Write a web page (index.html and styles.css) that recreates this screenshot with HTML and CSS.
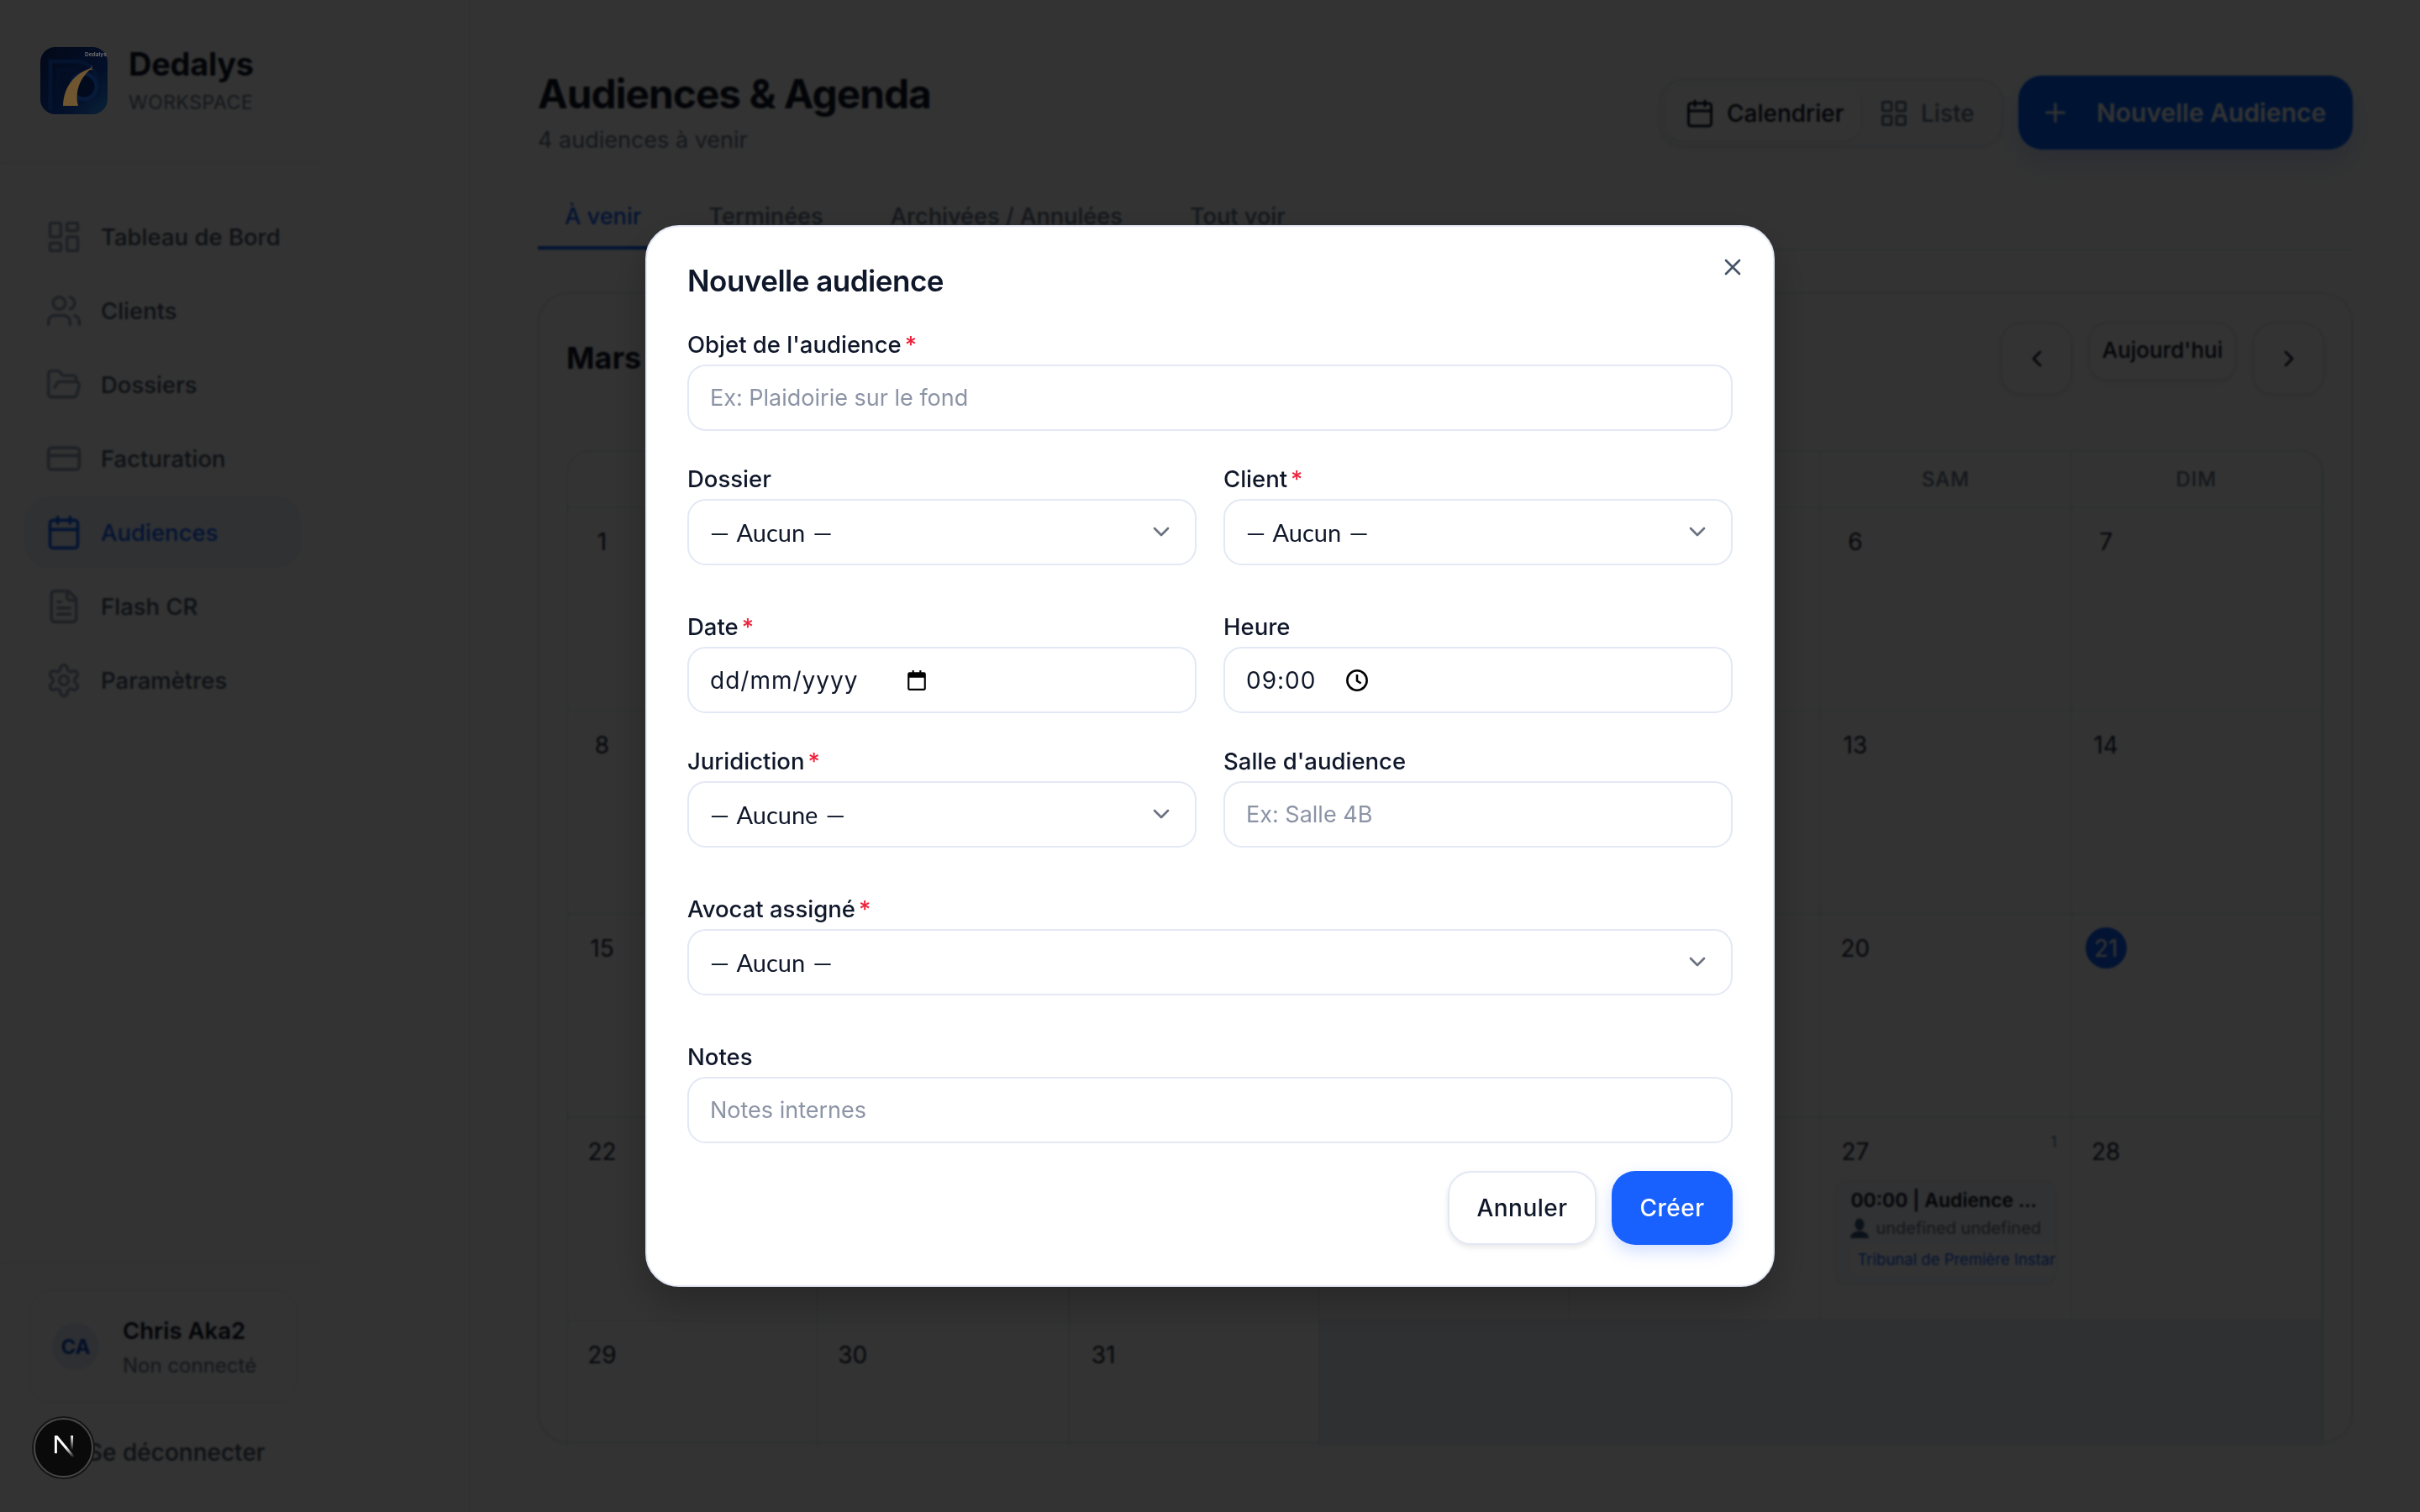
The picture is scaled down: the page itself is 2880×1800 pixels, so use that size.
FILE: index.html
```html
<!DOCTYPE html>
<html lang="fr">
<head>
  <meta charset="UTF-8">
  <title>Audiences &amp; Agenda</title>
  <link rel="stylesheet" href="styles.css">
</head>
<body>
  <div class="app">
    <aside class="sidebar">
      <div class="brand">
        <svg class="brand-logo" viewBox="0 0 80 80">
          <defs>
            <linearGradient id="logoBg" x1="0" y1="0" x2="1" y2="1">
              <stop offset="0" stop-color="#020817"/>
              <stop offset="0.65" stop-color="#03102a"/>
              <stop offset="1" stop-color="#0a2238"/>
            </linearGradient>
          </defs>
          <rect width="80" height="80" rx="18" fill="url(#logoBg)"/>
          <path d="M12 75V17h32a26 29 0 0 1 22 42" fill="none" stroke="#04132e" stroke-width="5"/>
          <path d="M21 75V27h22" fill="none" stroke="#030f26" stroke-width="4"/>
          <circle cx="52" cy="47" r="15" fill="#020a1e" stroke="#071a3a" stroke-width="5"/>
          <path d="M27 70C28 46 41 32 60 25l2-4-1 5 2 1-4 0C50 35 40 50 45 70z" fill="#6f5630"/>
          <text class="logo-word" x="53" y="11">Dedalys</text>
        </svg>
        <div>
          <div class="brand-name">Dedalys</div>
          <div class="brand-sub">WORKSPACE</div>
        </div>
      </div>

      <nav class="nav">
        <a class="nav-item">
          <svg class="icon" viewBox="0 0 24 24"><rect x="3" y="3" width="7" height="9" rx="1"/><rect x="14" y="3" width="7" height="5" rx="1"/><rect x="14" y="12" width="7" height="9" rx="1"/><rect x="3" y="16" width="7" height="5" rx="1"/></svg>
          Tableau de Bord
        </a>
        <a class="nav-item">
          <svg class="icon" viewBox="0 0 24 24"><path d="M16 21v-2a4 4 0 0 0-4-4H6a4 4 0 0 0-4 4v2"/><circle cx="9" cy="7" r="4"/><path d="M22 21v-2a4 4 0 0 0-3-3.87"/><path d="M16 3.13a4 4 0 0 1 0 7.75"/></svg>
          Clients
        </a>
        <a class="nav-item">
          <svg class="icon" viewBox="0 0 24 24"><path d="m6 14 1.5-2.9A2 2 0 0 1 9.24 10H20a2 2 0 0 1 1.94 2.5l-1.54 6a2 2 0 0 1-1.95 1.5H4a2 2 0 0 1-2-2V5a2 2 0 0 1 2-2h3.9a2 2 0 0 1 1.69.9l.81 1.2a2 2 0 0 0 1.67.9H18a2 2 0 0 1 2 2v2"/></svg>
          Dossiers
        </a>
        <a class="nav-item">
          <svg class="icon" viewBox="0 0 24 24"><rect x="2" y="5" width="20" height="14" rx="2"/><path d="M2 10h20"/></svg>
          Facturation
        </a>
        <a class="nav-item active">
          <svg class="icon" viewBox="0 0 24 24"><path d="M8 2v4"/><path d="M16 2v4"/><rect x="3" y="4" width="18" height="18" rx="2"/><path d="M3 10h18"/></svg>
          Audiences
        </a>
        <a class="nav-item">
          <svg class="icon" viewBox="0 0 24 24"><path d="M15 2H6a2 2 0 0 0-2 2v16a2 2 0 0 0 2 2h12a2 2 0 0 0 2-2V7Z"/><path d="M14 2v4a2 2 0 0 0 2 2h4"/><path d="M10 9H8"/><path d="M16 13H8"/><path d="M16 17H8"/></svg>
          Flash CR
        </a>
        <a class="nav-item">
          <svg class="icon" viewBox="0 0 24 24"><path d="M12.22 2h-.44a2 2 0 0 0-2 2v.18a2 2 0 0 1-1 1.73l-.43.25a2 2 0 0 1-2 0l-.15-.08a2 2 0 0 0-2.73.73l-.22.38a2 2 0 0 0 .73 2.73l.15.1a2 2 0 0 1 1 1.72v.51a2 2 0 0 1-1 1.74l-.15.09a2 2 0 0 0-.73 2.73l.22.38a2 2 0 0 0 2.73.73l.15-.08a2 2 0 0 1 2 0l.43.25a2 2 0 0 1 1 1.73V20a2 2 0 0 0 2 2h.44a2 2 0 0 0 2-2v-.18a2 2 0 0 1 1-1.73l.43-.25a2 2 0 0 1 2 0l.15.08a2 2 0 0 0 2.73-.73l.22-.39a2 2 0 0 0-.73-2.73l-.15-.08a2 2 0 0 1-1-1.74v-.5a2 2 0 0 1 1-1.74l.15-.09a2 2 0 0 0 .73-2.73l-.22-.38a2 2 0 0 0-2.73-.73l-.15.08a2 2 0 0 1-2 0l-.43-.25a2 2 0 0 1-1-1.73V4a2 2 0 0 0-2-2z"/><circle cx="12" cy="12" r="3"/></svg>
          Paramètres
        </a>
      </nav>

      <div class="side-foot">
        <div class="user-card">
          <div class="avatar">CA</div>
          <div>
            <div class="user-name">Chris Aka2</div>
            <div class="user-status">Non connecté</div>
          </div>
        </div>
        <div class="logout">Se déconnecter</div>
      </div>
    </aside>

    <main class="main">
      <header class="page-head">
        <div>
          <h1 class="page-title">Audiences &amp; Agenda</h1>
          <div class="page-sub">4 audiences à venir</div>
        </div>
        <div class="head-actions">
          <div class="view-toggle">
            <div class="view-btn on">
              <svg class="icon-sm" viewBox="0 0 24 24"><path d="M8 2v4"/><path d="M16 2v4"/><rect x="3" y="4" width="18" height="18" rx="2"/><path d="M3 10h18"/></svg>
              Calendrier
            </div>
            <div class="view-btn">
              <svg class="icon-sm" viewBox="0 0 24 24"><rect x="3" y="3" width="7" height="7" rx="1"/><rect x="14" y="3" width="7" height="7" rx="1"/><rect x="14" y="14" width="7" height="7" rx="1"/><rect x="3" y="14" width="7" height="7" rx="1"/></svg>
              Liste
            </div>
          </div>
          <div class="new-btn">
            <svg class="icon-sm" viewBox="0 0 24 24"><path d="M5 12h14"/><path d="M12 5v14"/></svg>
            Nouvelle Audience
          </div>
        </div>
      </header>

      <div class="tabs">
        <div class="tab on">À venir</div>
        <div class="tab">Terminées</div>
        <div class="tab">Archivées / Annulées</div>
        <div class="tab">Tout voir</div>
      </div>

      <section class="calendar">
        <div class="cal-head">
          <div class="cal-month">Mars 2026</div>
          <div class="cal-nav">
            <div class="cal-arrow"><svg class="icon-xs" viewBox="0 0 24 24"><path d="m15 18-6-6 6-6"/></svg></div>
            <div class="cal-today">Aujourd'hui</div>
            <div class="cal-arrow"><svg class="icon-xs" viewBox="0 0 24 24"><path d="m9 18 6-6-6-6"/></svg></div>
          </div>
        </div>
        <div class="cal-grid">
          <div class="dow">LUN</div><div class="dow">MAR</div><div class="dow">MER</div><div class="dow">JEU</div><div class="dow">VEN</div><div class="dow">SAM</div><div class="dow">DIM</div>

          <div class="cell"><span class="day">1</span></div><div class="cell"><span class="day">2</span></div><div class="cell"><span class="day">3</span></div><div class="cell"><span class="day">4</span></div><div class="cell"><span class="day">5</span></div><div class="cell"><span class="day">6</span></div><div class="cell"><span class="day">7</span></div>
          <div class="cell"><span class="day">8</span></div><div class="cell"><span class="day">9</span></div><div class="cell"><span class="day">10</span></div><div class="cell"><span class="day">11</span></div><div class="cell"><span class="day">12</span></div><div class="cell"><span class="day">13</span></div><div class="cell"><span class="day">14</span></div>
          <div class="cell"><span class="day">15</span></div><div class="cell"><span class="day">16</span></div><div class="cell"><span class="day">17</span></div><div class="cell"><span class="day">18</span></div><div class="cell"><span class="day">19</span></div><div class="cell"><span class="day">20</span></div><div class="cell"><span class="day today">21</span></div>
          <div class="cell"><span class="day">22</span></div><div class="cell"><span class="day">23</span></div><div class="cell"><span class="day">24</span></div><div class="cell"><span class="day">25</span></div><div class="cell"><span class="day">26</span></div>
          <div class="cell">
            <span class="day">27</span><span class="count">1</span>
            <div class="event">
              <div class="event-title">00:00 | Audience ...</div>
              <div class="event-who"><svg class="event-person" viewBox="0 0 20 22"><ellipse cx="10" cy="7" rx="5" ry="6.500"/><path d="M0 22c0-5 4-6 7-7.500h6c3 1.500 7 2.500 7 7.500z"/></svg>undefined undefined</div>
              <div class="event-court">Tribunal de Première Instance</div>
            </div>
          </div>
          <div class="cell"><span class="day">28</span></div>
          <div class="cell short"><span class="day">29</span></div><div class="cell short"><span class="day">30</span></div><div class="cell short"><span class="day">31</span></div>
          <div class="cell-empty"></div>
        </div>
      </section>
    </main>
  </div>

  <div class="overlay">
    <form class="modal">
      <svg class="modal-close" viewBox="0 0 24 24"><path d="M18 6 6 18"/><path d="m6 6 12 12"/></svg>
      <h2 class="modal-title">Nouvelle audience</h2>

      <div class="field gap">
        <label class="label">Objet de l'audience<span class="req">*</span></label>
        <input class="input" placeholder="Ex: Plaidoirie sur le fond">
      </div>

      <div class="row gap sel">
        <div class="field">
          <label class="label">Dossier</label>
          <div class="select-wrap">
            <select class="input"><option>— Aucun —</option></select>
            <svg class="chevron" viewBox="0 0 24 24"><path d="m6 9 6 6 6-6"/></svg>
          </div>
        </div>
        <div class="field">
          <label class="label">Client<span class="req">*</span></label>
          <div class="select-wrap">
            <select class="input"><option>— Aucun —</option></select>
            <svg class="chevron" viewBox="0 0 24 24"><path d="m6 9 6 6 6-6"/></svg>
          </div>
        </div>
      </div>

      <div class="row gap">
        <div class="field">
          <label class="label">Date<span class="req">*</span></label>
          <div class="input picker">
            <span class="date-text">dd/mm/yyyy</span>
            <svg class="picker-cal" viewBox="0 0 24 24"><path d="M4 3h3V1h2v2h6V1h2v2h3a2 2 0 0 1 2 2v16a2 2 0 0 1-2 2H4a2 2 0 0 1-2-2V5a2 2 0 0 1 2-2zm0 6v12h16V9z"/></svg>
          </div>
        </div>
        <div class="field">
          <label class="label">Heure</label>
          <div class="input picker">
            <span class="time-text">09:00</span>
            <svg class="picker-clock" viewBox="0 0 24 24"><circle cx="12" cy="12" r="10"/><path d="M12 6v6.500l4 2.500"/></svg>
          </div>
        </div>
      </div>

      <div class="row gap sel">
        <div class="field">
          <label class="label">Juridiction<span class="req">*</span></label>
          <div class="select-wrap">
            <select class="input"><option>— Aucune —</option></select>
            <svg class="chevron" viewBox="0 0 24 24"><path d="m6 9 6 6 6-6"/></svg>
          </div>
        </div>
        <div class="field">
          <label class="label">Salle d'audience</label>
          <input class="input" placeholder="Ex: Salle 4B">
        </div>
      </div>

      <div class="field gap sel">
        <label class="label">Avocat assigné<span class="req">*</span></label>
        <div class="select-wrap">
          <select class="input"><option>— Aucun —</option></select>
          <svg class="chevron" viewBox="0 0 24 24"><path d="m6 9 6 6 6-6"/></svg>
        </div>
      </div>

      <div class="field gap">
        <label class="label">Notes</label>
        <input class="input" placeholder="Notes internes">
      </div>

      <div class="modal-actions">
        <button type="button" class="btn btn-ghost">Annuler</button>
        <button type="button" class="btn btn-primary">Créer</button>
      </div>
    </form>
  </div>

  <div class="dev-badge">
    <svg viewBox="0 0 26 27">
      <defs>
        <linearGradient id="nDiag" gradientUnits="userSpaceOnUse" x1="2" y1="0" x2="25" y2="27">
          <stop offset="0.55" stop-color="#fff"/>
          <stop offset="1" stop-color="#fff" stop-opacity="0"/>
        </linearGradient>
        <linearGradient id="nBar" x1="0" y1="0" x2="0" y2="1">
          <stop offset="0" stop-color="#fff"/>
          <stop offset="1" stop-color="#fff" stop-opacity="0"/>
        </linearGradient>
      </defs>
      <rect x="1" y="0" width="3" height="22" fill="#fff"/>
      <path d="M2.500 0 25 27" fill="none" stroke="url(#nDiag)" stroke-width="3.200"/>
      <rect x="21" y="0" width="3" height="18" fill="url(#nBar)"/>
    </svg>
  </div>
</body>
</html>
```

FILE: styles.css
```css
* {
  box-sizing: border-box;
}

html, body {
  margin: 0;
  height: 100%;
}

body {
  font-family: Inter, "Noto Sans", sans-serif;
  color: #0f172a;
  background: #fff;
  overflow: hidden;
}

.app {
  display: flex;
  height: 1800px;
}

/* sidebar */
.sidebar {
  width: 560px;
  flex: none;
  border-right: 2px solid #e8ecf2;
  display: flex;
  flex-direction: column;
}

.brand {
  width: 388px;
  height: 195px;
  padding: 56px 0 0 48px;
  display: flex;
  gap: 25px;
  border-bottom: 2px solid #eef1f6;
}

/* the logo artwork keeps its own dimmed tones, so it sits over the overlay */
.brand-logo {
  position: relative;
  z-index: 2;
  width: 80px;
  height: 80px;
}

.logo-word {
  font-size: 6.500px;
  font-weight: 700;
  fill: #6d6d6d;
}

.brand-name {
  font-size: 38px;
  font-weight: 700;
  line-height: 44px;
  letter-spacing: -0.3px;
  margin-top: -2px;
}

.brand-sub {
  font-size: 23px;
  line-height: 30px;
  margin-top: 9px;
  color: #64748b;
  letter-spacing: .5px;
}

.nav {
  width: 388px;
  padding: 45px 30px 0;
  display: flex;
  flex-direction: column;
  gap: 4px;
}

.nav-item {
  height: 84px;
  padding-left: 22px;
  display: flex;
  align-items: center;
  gap: 22px;
  border: 2px solid transparent;
  border-radius: 28px;
  font-size: 27.500px;
  font-weight: 500;
  color: #475569;
}

.nav-item.active {
  background: #f0f5fd;
  border-color: #e8f0fb;
  color: #0f62fe;
}

.icon, .icon-sm, .icon-xs {
  fill: none;
  stroke: currentColor;
  stroke-width: 2;
  stroke-linecap: round;
  stroke-linejoin: round;
  flex: none;
}

.icon {
  width: 44px;
  height: 44px;
  stroke: #94a3b8;
}

.nav-item.active .icon {
  stroke: #0f62fe;
}

.side-foot {
  width: 388px;
  margin-top: auto;
  height: 297px;
  border-top: 2px solid #eef1f6;
  padding: 30px 33px 0 34px;
}

.user-card {
  height: 136px;
  border: 2px solid #f1f5f9;
  border-radius: 28px;
  display: flex;
  align-items: center;
  gap: 28px;
  padding-left: 26px;
  background: #fdfdfe;
}

.avatar {
  width: 56px;
  height: 56px;
  border-radius: 50%;
  background: #e2ecfb;
  color: #0f4fc7;
  font-size: 24px;
  font-weight: 700;
  display: flex;
  align-items: center;
  justify-content: center;
}

.user-name {
  font-size: 27.500px;
  font-weight: 600;
  line-height: 36px;
  margin-top: 2px;
}

.user-status {
  font-size: 24px;
  line-height: 32px;
  margin-top: 8px;
  color: #64748b;
}

.logout {
  margin-top: 41px;
  padding-left: 70px;
  font-size: 28px;
  font-weight: 500;
  color: #475569;
  white-space: nowrap;
}

/* main */
.main {
  flex: 1;
  padding: 0 80px;
  min-width: 0;
}

.page-head {
  height: 204px;
  padding-top: 80px;
  display: flex;
  justify-content: space-between;
  align-items: flex-start;
}

.page-title {
  margin: 0;
  font-size: 47.800px;
  line-height: 64px;
  font-weight: 700;
  letter-spacing: -1px;
}

.page-sub {
  font-size: 27px;
  line-height: 36px;
  margin-top: 5px;
  color: #64748b;
}

.head-actions {
  display: flex;
  gap: 18px;
  margin-top: 10px;
}

.view-toggle {
  width: 409px;
  height: 81px;
  margin-top: 4px;
  border: 2px solid #e2e8f0;
  border-radius: 28px;
  background: #f8fafc;
  padding: 6px;
  display: flex;
  box-shadow: 0 2px 6px rgba(15, 23, 42, .08);
}

.view-btn {
  height: 65px;
  padding: 0 22px;
  display: flex;
  align-items: center;
  gap: 14px;
  font-size: 28px;
  font-weight: 500;
  color: #64748b;
  border-radius: 20px;
}

.view-btn.on {
  width: 231px;
  background: #fff;
  color: #0f172a;
  box-shadow: 0 2px 6px rgba(15, 23, 42, .1);
}

.icon-sm {
  width: 36px;
  height: 36px;
}

.new-btn {
  width: 398px;
  height: 88px;
  padding-left: 26px;
  border-radius: 28px;
  background: #0062ff;
  color: #fff;
  display: flex;
  align-items: center;
  gap: 31px;
  font-size: 30px;
  font-weight: 600;
  box-shadow: 0 16px 32px rgba(15, 98, 254, .2);
}

.tabs {
  height: 95px;
  padding-top: 34px;
  display: flex;
  gap: 16px;
  border-bottom: 2px solid #e2e8f0;
}

.tab {
  height: 59px;
  padding: 0 32px;
  font-size: 27.200px;
  line-height: 40px;
  font-weight: 500;
  color: #64748b;
}

.tab.on {
  color: #0f62fe;
  border-bottom: 4px solid #0f62fe;
}

.calendar {
  margin-top: 49px;
  height: 1370px;
  border: 2px solid #e2e8f0;
  border-radius: 36px;
  padding: 0 32px;
  box-shadow: 0 2px 8px rgba(15, 23, 42, .05);
}

.cal-head {
  height: 186px;
  padding-top: 34px;
  display: flex;
  justify-content: space-between;
  align-items: flex-start;
}

.cal-month {
  font-size: 36px;
  font-weight: 700;
  line-height: 84px;
}

.cal-nav {
  display: flex;
  gap: 20px;
  align-items: flex-start;
}

.cal-arrow {
  width: 85px;
  height: 86px;
  border: 2px solid #e2e8f0;
  border-radius: 24px;
  display: flex;
  align-items: center;
  justify-content: center;
  box-shadow: 0 2px 6px rgba(15, 23, 42, .1);
}

.icon-xs {
  width: 32px;
  height: 32px;
}

.cal-today {
  width: 175px;
  height: 69px;
  border: 2px solid #e2e8f0;
  border-radius: 20px;
  text-align: center;
  line-height: 62px;
  font-size: 26px;
  font-weight: 500;
  box-shadow: 0 2px 6px rgba(15, 23, 42, .1);
}

.cal-grid {
  display: grid;
  grid-template-columns: repeat(7, 1fr);
  grid-template-rows: 67px repeat(4, 242px) 148px;
  border-radius: 28px 28px 0 0;
  border: 2px solid #e2e8f0;
  border-bottom: 0;
  overflow: hidden;
}

.dow {
  display: flex;
  align-items: center;
  justify-content: center;
  font-size: 24px;
  font-weight: 500;
  letter-spacing: 1px;
  color: #64748b;
  border-right: 2px solid #e2e8f0;
  border-bottom: 2px solid #e2e8f0;
}

.cell {
  position: relative;
  min-width: 0;
  padding: 15px 16px 0;
  border-right: 2px solid #e2e8f0;
  border-bottom: 2px solid #e2e8f0;
}

.cell.short {
  border-bottom: 0;
}

.cell-empty {
  grid-column: span 4;
  background: #ebeff4;
}

.day {
  display: flex;
  width: 49px;
  height: 49px;
  border-radius: 50%;
  align-items: center;
  justify-content: center;
  font-size: 28px;
  font-weight: 400;
  color: #1e293b;
}

.day.today {
  background: #0f62fe;
  color: #fff;
}

.count {
  position: absolute;
  top: 18px;
  right: 16px;
  font-size: 18px;
  color: #64748b;
}

.event {
  height: 125px;
  margin-top: 10px;
  padding: 6px 0 0 17px;
  border: 2px solid #eef2f8;
  border-radius: 14px;
  background: #f5f8fc;
  overflow: hidden;
}

.event-title {
  font-size: 23px;
  font-weight: 600;
  line-height: 32px;
  white-space: nowrap;
}

.event-who {
  font-size: 20px;
  line-height: 26px;
  margin-top: 4px;
  color: #64748b;
  white-space: nowrap;
  display: flex;
  align-items: center;
  gap: 8px;
}

.event-person {
  width: 22px;
  height: 24px;
  fill: #3d5a80;
  flex: none;
}

.event-court {
  margin-top: 8px;
  height: 34px;
  width: 260px;
  padding-left: 8px;
  border-radius: 8px;
  background: #fff;
  color: #0f62fe;
  font-size: 18.500px;
  line-height: 32px;
  white-space: nowrap;
}

/* modal */
.overlay {
  position: fixed;
  inset: 0;
  background: rgba(0, 0, 0, .8);
  backdrop-filter: blur(1px);
  display: flex;
  align-items: center;
  justify-content: center;
}

.modal {
  position: relative;
  width: 1344px;
  padding: 40px 48px 48px;
  background: #fff;
  border: 2px solid #e2e8f4;
  border-radius: 40px;
  box-shadow: 0 20px 50px rgba(0, 0, 0, .25);
}

.modal-close {
  position: absolute;
  top: 32px;
  right: 32px;
  width: 32px;
  height: 32px;
  fill: none;
  stroke: #475569;
  stroke-width: 2;
  stroke-linecap: round;
}

.modal-title {
  margin: 0;
  font-size: 35px;
  line-height: 48px;
  font-weight: 600;
  letter-spacing: -.5px;
}

.gap {
  margin-top: 39px;
}

.modal-title + .gap {
  margin-top: 34px;
}

.sel {
  padding-bottom: 16px;
}

.row {
  display: grid;
  grid-template-columns: 1fr 1fr;
  gap: 32px;
}

.field {
  display: flex;
  flex-direction: column;
  min-width: 0;
}

.label {
  font-size: 27.500px;
  line-height: 36px;
  font-weight: 500;
  margin-bottom: 6px;
  color: #0f172a;
}

.req {
  color: #ef233c;
  margin-left: 4px;
}

.input {
  width: 100%;
  height: 79px;
  padding: 0 25px;
  border: 2px solid #e2e8f4;
  border-radius: 22px;
  background: #fff;
  font: 400 27px Inter, "Noto Sans", sans-serif;
  color: #0f172a;
  outline: 0;
}

.input::placeholder {
  color: #8b93a5;
}

/* Lato has the shorter dash of the reference's select text */
select.input {
  appearance: none;
  font: 400 29px Lato, Inter, sans-serif;
  word-spacing: 2px;
}

.select-wrap {
  position: relative;
}

.chevron {
  position: absolute;
  right: 26px;
  top: 23px;
  width: 32px;
  height: 32px;
  fill: none;
  stroke: #6b7280;
  stroke-width: 2;
  stroke-linecap: round;
  stroke-linejoin: round;
}

.picker {
  display: flex;
  align-items: center;
  font-size: 28px;
}

.date-text {
  width: 233px;
  letter-spacing: 1px;
}

.time-text {
  width: 118px;
  letter-spacing: 1px;
}

.picker-cal {
  width: 26px;
  height: 26px;
  fill: #000;
}

.picker-clock {
  width: 28px;
  height: 28px;
  fill: none;
  stroke: #000;
  stroke-width: 2.200;
}

.modal-actions {
  margin-top: 33px;
  display: flex;
  justify-content: flex-end;
  gap: 18px;
}

.btn {
  height: 88px;
  border-radius: 28px;
  font: 500 28px Inter, "Noto Sans", sans-serif;
  letter-spacing: .5px;
}

.btn-ghost {
  width: 177px;
  background: #fff;
  color: #0f172a;
  border: 2px solid #e2e8f4;
  box-shadow: 0 3px 6px rgba(15, 23, 42, .1);
}

.btn-primary {
  width: 144px;
  background: #1961ff;
  color: #fff;
  border: 0;
  box-shadow: 0 8px 20px rgba(25, 97, 255, .2);
}

.dev-badge {
  position: fixed;
  left: 40px;
  top: 1688px;
  width: 71px;
  height: 71px;
  padding: 19px 20px 0 22px;
  border-radius: 50%;
  background: #0a0a0a;
  border: 2px solid #484848;
  box-shadow: 0 0 0 2px #161616;
}

.dev-badge svg {
  display: block;
  width: 100%;
  height: auto;
}
```
